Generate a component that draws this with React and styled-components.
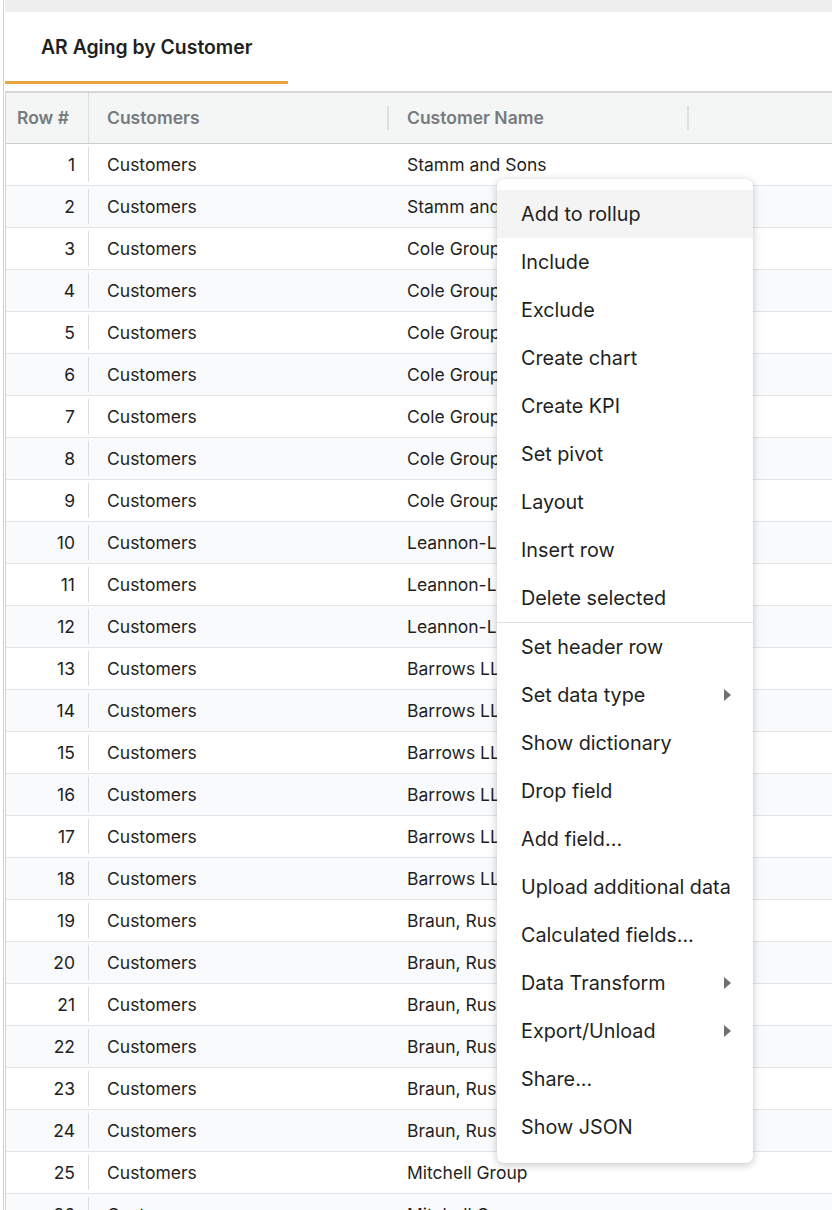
import React from "react";
import styled, { createGlobalStyle } from "styled-components";

const GlobalStyle = createGlobalStyle`
  html, body { margin: 0; padding: 0; background: #fff; }
  body { font-family: "Inter", "Noto Sans", sans-serif; color: #222; overflow: hidden; }
  * { box-sizing: border-box; }
`;

const Page = styled.div`
  position: relative;
  height: 1210px;
  margin-left: 3px;
  border-left: 1px solid #d2d2d2;
  overflow: hidden;
`;

const Inner = styled.div`
  margin-left: 1px;
`;

const TopStrip = styled.div`
  height: 12px;
  background: #eeeeee;
`;

const TabBar = styled.div`
  height: 79px;
  display: flex;
  align-items: flex-start;
`;

const Tab = styled.div`
  width: 283px;
  height: 72px;
  padding-left: 36px;
  display: flex;
  align-items: center;
  font-size: 19.4px;
  font-weight: 600;
  color: #1f1f1f;
  border-bottom: 3px solid #eba53c;
`;

const Table = styled.div`
  border-top: 2px solid #d4d6d8;
  border-left: 1px solid #d4d6d8;
`;

const HeaderRow = styled.div`
  display: flex;
  height: 51px;
  background: #f4f5f5;
  border-bottom: 1px solid #c9cbcd;
  align-items: center;
`;

const HeadCell = styled.div`
  position: relative;
  width: ${(p) => p.$w}px;
  flex: none;
  height: 100%;
  display: flex;
  align-items: center;
  padding-left: ${(p) => p.$pl}px;
  padding-bottom: 2px;
  font-size: 17.5px;
  font-weight: 600;
  color: #777b7e;
  border-right: ${(p) => (p.$line ? "1px solid #dcdee0" : "none")};
`;

const Sep = styled.span`
  position: absolute;
  right: 0;
  top: 13px;
  width: 2px;
  height: 24px;
  background: #dcdee0;
`;

const Row = styled.div`
  display: flex;
  height: 42px;
  background: ${(p) => (p.$alt ? "#f9fafc" : "#ffffff")};
  border-bottom: 1px solid #e1e3e6;
  align-items: center;
  font-size: 17.5px;
  color: #1f1f1f;
`;

const NumCell = styled.div`
  width: 83px;
  flex: none;
  height: 35px;
  display: flex;
  align-items: center;
  justify-content: flex-end;
  padding-right: 13px;
  border-right: 1px solid #dcdee0;
`;

const Cell = styled.div`
  width: ${(p) => p.$w}px;
  flex: none;
  padding-left: ${(p) => p.$pl}px;
  white-space: nowrap;
  overflow: hidden;
`;

const Menu = styled.div`
  position: absolute;
  left: 493px;
  top: 179px;
  width: 256px;
  padding: 11px 0 12px;
  background: #fff;
  border-radius: 7px;
  box-shadow: 0 2px 8px rgba(0, 0, 0, 0.22), 0 0 1px rgba(0, 0, 0, 0.12);
`;

const Item = styled.div`
  height: 48px;
  display: flex;
  align-items: center;
  justify-content: space-between;
  padding: 0 22px 0 24px;
  font-size: 19.8px;
  color: #1f1f1f;
  white-space: nowrap;
  background: ${(p) => (p.$active ? "#f4f4f4" : "transparent")};
`;

const Divider = styled.div`
  height: 1px;
  background: #dedede;
`;

const Arrow = styled.span`
  width: 0;
  height: 0;
  border-top: 6px solid transparent;
  border-bottom: 6px solid transparent;
  border-left: 7px solid #707070;
`;

const names = [
  "Stamm and Sons", "Stamm and Sons",
  "Cole Group", "Cole Group", "Cole Group", "Cole Group", "Cole Group", "Cole Group", "Cole Group",
  "Leannon-Lind", "Leannon-Lind", "Leannon-Lind",
  "Barrows LLC", "Barrows LLC", "Barrows LLC", "Barrows LLC", "Barrows LLC", "Barrows LLC",
  "Braun, Russel and Hagenes", "Braun, Russel and Hagenes", "Braun, Russel and Hagenes",
  "Braun, Russel and Hagenes", "Braun, Russel and Hagenes", "Braun, Russel and Hagenes",
  "Mitchell Group", "Mitchell Group",
];

const menuGroups = [
  [
    { label: "Add to rollup", active: true },
    { label: "Include" },
    { label: "Exclude" },
    { label: "Create chart" },
    { label: "Create KPI" },
    { label: "Set pivot" },
    { label: "Layout" },
    { label: "Insert row" },
    { label: "Delete selected" },
  ],
  [
    { label: "Set header row" },
    { label: "Set data type", sub: true },
    { label: "Show dictionary" },
    { label: "Drop field" },
    { label: "Add field..." },
    { label: "Upload additional data" },
    { label: "Calculated fields..." },
    { label: "Data Transform", sub: true },
    { label: "Export/Unload", sub: true },
    { label: "Share..." },
    { label: "Show JSON" },
  ],
];

export default function App() {
  return (
    <>
      <GlobalStyle />
      <Page>
        <Inner>
          <TopStrip />
          <TabBar>
            <Tab>AR Aging by Customer</Tab>
          </TabBar>
          <Table>
            <HeaderRow>
              <HeadCell $w={83} $pl={11} $line>Row #</HeadCell>
              <HeadCell $w={300} $pl={18}>
                Customers
                <Sep />
              </HeadCell>
              <HeadCell $w={300} $pl={18}>
                Customer Name
                <Sep />
              </HeadCell>
            </HeaderRow>
            {names.map((n, i) => (
              <Row key={i} $alt={i % 2 === 1}>
                <NumCell>{i + 1}</NumCell>
                <Cell $w={300} $pl={18}>Customers</Cell>
                <Cell $w={300} $pl={18}>{n}</Cell>
              </Row>
            ))}
          </Table>
        </Inner>
        <Menu>
          {menuGroups.map((g, gi) => (
            <React.Fragment key={gi}>
              {gi > 0 && <Divider />}
              {g.map((it) => (
                <Item key={it.label} $active={it.active}>
                  {it.label}
                  {it.sub && <Arrow />}
                </Item>
              ))}
            </React.Fragment>
          ))}
        </Menu>
      </Page>
    </>
  );
}
